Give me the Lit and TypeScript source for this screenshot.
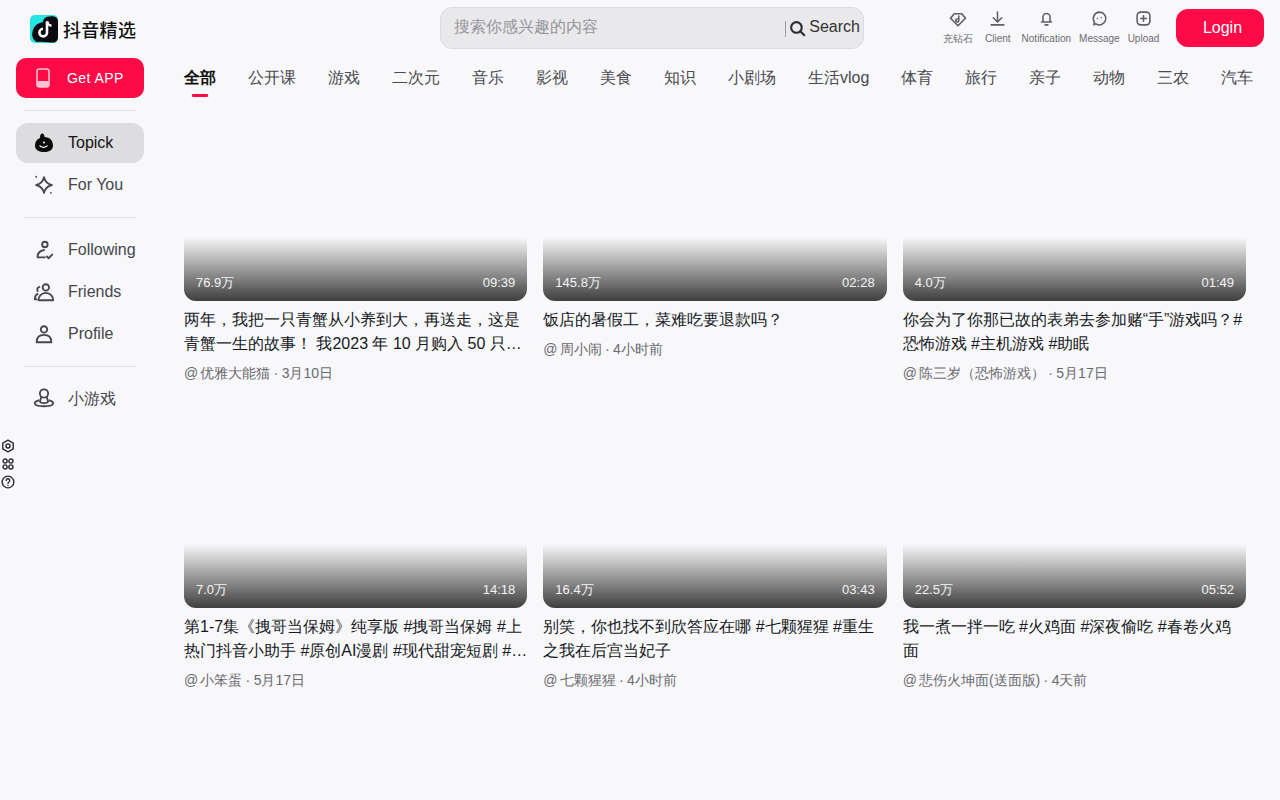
import { LitElement, html, css, svg } from "lit";
import { customElement } from "lit/decorators.js";

const tabs = ["全部","公开课","游戏","二次元","音乐","影视","美食","知识","小剧场","生活vlog","体育","旅行","亲子","动物","三农","汽车"];
const cards = [
  { v:"76.9万", d:"09:39", t:"两年，我把一只青蟹从小养到大，再送走，这是青蟹一生的故事！ 我2023 年 10 月购入 50 只小青蟹苗，养了很久很久", a:"优雅大能猫", w:"3月10日" },
  { v:"145.8万", d:"02:28", t:"饭店的暑假工，菜难吃要退款吗？", a:"周小闹", w:"4小时前" },
  { v:"4.0万", d:"01:49", t:"你会为了你那已故的表弟去参加赌“手”游戏吗？#恐怖游戏 #主机游戏 #助眠", a:"陈三岁（恐怖游戏）", w:"5月17日" },
  { v:"7.0万", d:"14:18", t:"第1-7集《拽哥当保姆》纯享版 #拽哥当保姆 #上热门抖音小助手 #原创AI漫剧 #现代甜宠短剧 #搞笑漫剧 #漫剧推荐", a:"小笨蛋", w:"5月17日" },
  { v:"16.4万", d:"03:43", t:"别笑，你也找不到欣答应在哪 #七颗猩猩 #重生之我在后宫当妃子", a:"七颗猩猩", w:"4小时前" },
  { v:"22.5万", d:"05:52", t:"我一煮一拌一吃 #火鸡面 #深夜偷吃 #春卷火鸡面", a:"悲伤火坤面(送面版)", w:"4天前" },
];
const ic = (body: unknown, size = 22, sw = 2) => html`<svg width=${size} height=${size} viewBox="0 0 24 24" fill="none" stroke="currentColor" stroke-width=${sw} stroke-linecap="round" stroke-linejoin="round">${body}</svg>`;

@customElement("app-root")
export class AppRoot extends LitElement {
  static styles = css`
    :host { display:block; width:1280px; height:800px; overflow:hidden; background:#f8f8fa; color:#161823;
      font-family:"Liberation Sans",sans-serif; }
    .page { display:grid; grid-template-columns:160px 1fr; grid-template-rows:54px 1fr; height:800px; }
    header { grid-column:1 / 3; display:flex; align-items:center; position:relative; }
    .logo { width:160px; padding-left:30px; box-sizing:border-box; display:flex; align-items:center; gap:5px; font-family:"Noto Sans CJK SC",sans-serif; font-size:18px; font-weight:500; letter-spacing:.3px; color:#111; flex:none; margin-top:4px; }
    .logo svg { display:block; }
    .search { width:424px; height:42px; margin-left:280px; margin-top:2px; flex:none; box-sizing:border-box; border:1px solid #dcdce0; border-radius:12px; background:#e9e9ec; display:flex; align-items:center; padding:0 3px 0 13px; font-size:16px; color:#94949a; }
    .search .ph { flex:1; margin-top:-1px; }
    .search .sep { width:1px; height:16px; background:#9a9a9e; margin-right:3px; margin-top:1px; }
    .search .btn { display:flex; align-items:center; gap:3px; color:#333; margin-top:-2px; }
    .search svg { color:#2b2b30; margin-top:3px; }
    .acts { display:flex; align-items:flex-start; position:absolute; left:943px; top:10px; }
    .act { display:flex; flex-direction:column; align-items:center; font-size:10px; color:#6b6b70; line-height:12px; gap:6px; margin-right:8px; white-space:nowrap; }
    .act svg { display:block; color:#5f5f64; }
    .act .i { height:17px; }
    .act.w1 { margin-right:12px; }
    .act.w2 { margin-right:11px; }
    .login { position:absolute; left:1176px; top:9px; width:88px; height:38px; padding-left:5px; box-sizing:border-box; border-radius:12px; background:#fe0b47; color:#fff; font-size:16px; display:flex; align-items:center; justify-content:center; }
    aside { display:flex; flex-direction:column; align-items:stretch; padding:4px 16px 0; position:relative; }
    .get { height:40px; border-radius:10px; background:#fe0b47; color:#fff; font-size:14px; display:flex; align-items:center; gap:14px; padding-left:17px; letter-spacing:.45px; font-weight:500; }
    .get svg { flex:none; }
    .hr { height:1px; background:#e2e2e6; margin:12px 8px; }
    .hr.b { margin:10px 8px 12px; }
    .hr.c { margin:10px 8px 11px; }
    .nav { height:40px; border-radius:12px; display:flex; align-items:center; gap:13px; padding-left:17px; font-size:16px; color:#46464c; margin-bottom:2px; }
    .nav.on { background:#dddde0; color:#111; }
    .nav svg { flex:none; }
    .nav .cjk { margin-top:2px; }
    .tools { position:absolute; left:1px; top:385px; display:flex; flex-direction:column; gap:4px; color:#2a2a30; }
    .tools svg { display:block; }
    main { min-width:0; padding:0 34px 0 24px; }
    .tabs { display:flex; gap:32px; font-size:16px; color:#4a4a50; height:54px; white-space:nowrap; margin-right:-20px; }
    .tab { position:relative; line-height:47px; }
    .tab.on { color:#111; font-weight:700; }
    .tab.on::after { content:""; position:absolute; left:8px; width:16px; height:3px; top:40px; background:#fe0b47; border-radius:1px; }
    .grid { display:grid; grid-template-columns:repeat(3,1fr); gap:30px 16px; }
    .thumb { height:193px; border-radius:0 0 12px 12px; position:relative; overflow:hidden; }
    .thumb .ov { position:absolute; left:0; right:0; bottom:0; height:64px; background:linear-gradient(to bottom,rgba(0,0,0,0),rgba(0,0,0,.75)); display:flex; align-items:flex-end; justify-content:space-between; padding:0 12px 10px; box-sizing:border-box; color:#f4f4f4; font-size:13px; line-height:17px; }
    .title { margin-top:7px; font-size:16px; line-height:24px; color:#161823; display:-webkit-box; -webkit-box-orient:vertical; -webkit-line-clamp:2; overflow:hidden; }
    .meta { margin-top:5px; font-size:14px; line-height:24px; color:#6a6a70; white-space:nowrap; word-spacing:-.5px; }
    .at { margin-right:2px; }
  `;
  render() {
    return html`<div class="page">
      <header>
        <div class="logo">
          <svg width="28" height="28" viewBox="0 0 28 28"><rect width="28" height="28" rx="5" fill="#22e6df"/><path d="M7 27C3 25 1.500 21 2.500 16.500C4 10 9 7.500 12.500 7.500L14 4C16 1.500 20 1 24 1.500C27 2 28 4 28 7V22C28 25.500 26 27.500 23 27.500C18 27.500 14 26 7 27Z" fill="#0b0b0f"/><path d="M17 6.500V17.500A3.800 3.800 0 1 1 13 13.800" fill="none" stroke="#fff" stroke-width="2.600"/><path d="M17 6.500C17.600 9.200 19 10.400 21.500 10.700" fill="none" stroke="#fff" stroke-width="2.400"/></svg>
          <span>抖音精选</span>
        </div>
        <div class="search">
          <span class="ph">搜索你感兴趣的内容</span><span class="sep"></span>
          <span class="btn">${ic(svg`<circle cx="10.500" cy="10.500" r="7.500"/><path d="M16 16l5.500 5.500"/>`,17,3)}<span>Search</span></span>
        </div>
        <div class="acts">
          <div class="act w1"><span class="i">${ic(svg`<path d="M7 5h10l5 6-10 10L2 11Z"/><path d="M13 8v6a2 2 0 1 1-2-2"/>`,18,2.200)}</span>充钻石</div>
          <div class="act w2"><span class="i">${ic(svg`<path d="M12 3v13M6 11l6 6 6-6M3 21h18"/>`,17,2.200)}</span>Client</div>
          <div class="act"><span class="i">${ic(svg`<path d="M7 17V10a5 5 0 0 1 10 0v7ZM5 17h14M10 21h4"/>`,17,2.200)}</span>Notification</div>
          <div class="act"><span class="i">${ic(svg`<path d="M12 3a9 9 0 1 1-5 16.500L4 21l.8-4A9 9 0 0 1 12 3Z"/><path d="M9 12h.01M14.500 10.500h.01"/>`,17,2.200)}</span>Message</div>
          <div class="act"><span class="i">${ic(svg`<rect x="3" y="3" width="18" height="18" rx="5"/><path d="M12 8v8M8 12h8"/>`,17,2.200)}</span>Upload</div>
        </div>
        <div class="login">Login</div>
      </header>
      <aside>
        <div class="get"><svg width="20" height="20" viewBox="0 0 20 20" fill="none"><rect x="4" y="1" width="12" height="18" rx="2.500" stroke="#ffc2d0" stroke-width="1.600"/><rect x="4" y="13" width="12" height="6" rx="1.500" fill="#ffc2d0"/></svg><span>Get APP</span></div>
        <div class="hr"></div>
        <div class="nav on">
          <svg width="22" height="22" viewBox="0 0 22 22"><path d="M9 1.500c2 0 2.300 2 2.500 3.500 5 .3 8.500 3 8.500 8.500 0 4-3 6.500-9 6.500s-9-2.500-9-6.500c0-4 2-6.500 5-7.500C7 4 7.500 1.500 9 1.500Z" fill="#0a0a0a"/><path d="M7 14c2 1.500 5 1.500 7 0" stroke="#fff" stroke-width="1.300" fill="none" stroke-linecap="round"/><circle cx="11" cy="10.500" r="1" fill="#fff"/></svg>
          <span>Topick</span>
        </div>
        <div class="nav">${ic(svg`<path d="M12 3.500c1.200 4.800 3.700 7.300 8.500 8.500-4.800 1.200-7.300 3.700-8.500 8.500-1.200-4.800-3.700-7.300-8.500-8.500 4.800-1.200 7.300-3.700 8.500-8.500Z"/><path d="M3.500 3h.01M19.500 20.500h.01"/>`)}<span>For You</span></div>
        <div class="hr b"></div>
        <div class="nav">${ic(svg`<circle cx="13" cy="6" r="3"/><path d="M12 12c-4 1-7 3-7 7v1h8M15 19l2 2 4-4"/>`)}<span>Following</span></div>
        <div class="nav">${ic(svg`<circle cx="14" cy="7" r="3.500"/><path d="M6 21c0-4 3-8 8-8s8 4 8 8ZM7 6.500C5 7 4 9 5 11M4 20H2c0-3 1-5 3-6"/>`)}<span>Friends</span></div>
        <div class="nav">${ic(svg`<circle cx="12" cy="7" r="3.500"/><path d="M4 21c0-5 3-8 8-8s8 3 8 8Z"/>`)}<span>Profile</span></div>
        <div class="hr c"></div>
        <div class="nav">${ic(svg`<circle cx="12" cy="7" r="4.500"/><path d="M9 11l-1.500 5c1 2 8 2 9 0L15 11"/><path d="M6 14.500c-2.500.7-4 1.800-4 3.300 0 2 4.500 3.200 10 3.200s10-1.200 10-3.200c0-1.500-1.500-2.600-4-3.300"/>`)}<span class="cjk">小游戏</span></div>
        <div class="tools">
          ${ic(svg`<path d="M12 2l9 5v10l-9 5-9-5V7Z"/><circle cx="12" cy="12" r="3.500"/>`,14,2.400)}
          ${ic(svg`<circle cx="7" cy="7" r="3.500"/><circle cx="17" cy="7" r="3.500"/><circle cx="7" cy="17" r="3.500"/><circle cx="17" cy="17" r="3.500"/>`,14,2.400)}
          ${ic(svg`<circle cx="12" cy="12" r="10"/><path d="M9 9.500a3 3 0 1 1 4.500 2.500c-1 .6-1.500 1.200-1.500 2.500M12 18h.01"/>`,14,2.400)}
        </div>
      </aside>
      <main>
        <div class="tabs">${tabs.map((t,i)=>html`<span class="tab ${i===0?"on":""}">${t}</span>`)}</div>
        <div class="grid">${cards.map(c=>html`<div>
          <div class="thumb"><div class="ov"><span>${c.v}</span><span>${c.d}</span></div></div>
          <div class="title">${c.t}</div>
          <div class="meta"><span class="at">@</span>${c.a} · ${c.w}</div>
        </div>`)}</div>
      </main>
    </div>`;
  }
}
